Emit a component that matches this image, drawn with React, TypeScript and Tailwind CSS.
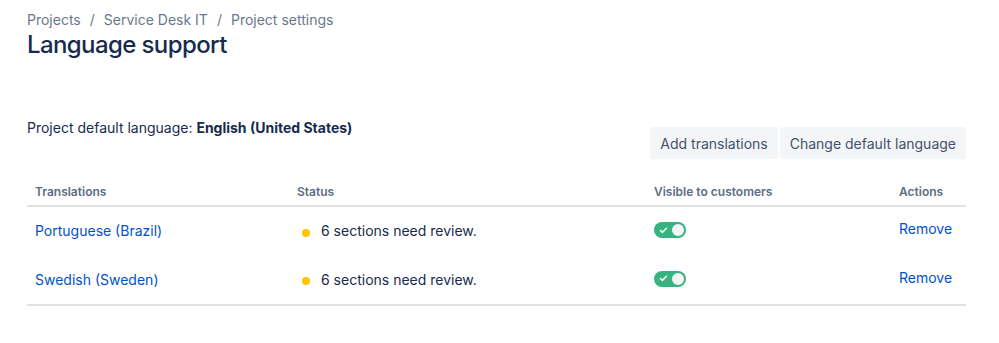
import { Check } from 'lucide-react';

const rows = [
  { name: 'Portuguese (Brazil)', status: '6 sections need review.' },
  { name: 'Swedish (Sweden)', status: '6 sections need review.' },
];

function Toggle() {
  return (
    <div className="relative flex h-4 w-8 items-center rounded-full bg-[#36B37E] px-[2px]">
      <Check className="ml-[3px] h-[9px] w-[9px] text-white" strokeWidth={4} />
      <div className="ml-auto h-3 w-3 rounded-full bg-[#F4F5F7]" />
    </div>
  );
}

export default function App() {
  return (
    <div className="min-h-screen bg-white pl-[27px] pr-[33px] font-['Inter',sans-serif] text-[#172B4D]">
      {/* Header */}
      <nav className="flex items-center pt-[10px] text-[14px] leading-5 text-[#6B778C]">
        <span>Projects</span>
        <span className="mx-[9px]">/</span>
        <span>Service Desk IT</span>
        <span className="mx-[9px]">/</span>
        <span>Project settings</span>
      </nav>
      <h1 className="mt-px text-[24px] font-medium leading-7 tracking-[-0.025em] text-[#172B4D]">
        Language support
      </h1>

      <div className="mt-[59px] flex items-start justify-between">
        <p className="text-[14px] leading-5">
          Project default language: <span className="font-bold">English (United States)</span>
        </p>
        <div className="mt-[9px] flex gap-[2px]">
          <button className="h-8 rounded-[3px] bg-[#F4F5F7] px-[10px] text-[14px] text-[#42526E]">
            Add translations
          </button>
          <button className="h-8 rounded-[3px] bg-[#F4F5F7] px-[10px] text-[14px] text-[#42526E]">
            Change default language
          </button>
        </div>
      </div>

      {/* Table */}
      <div className="mt-[21px] border-b-2 border-[#DFE1E6]">
        <div className="grid grid-cols-[262px_357px_245px_1fr] border-b-2 border-[#DFE1E6] pb-[5px] pt-1 text-[12px] font-semibold leading-4 text-[#5E6C84]">
          <div className="px-2">Translations</div>
          <div className="px-2">Status</div>
          <div className="px-2">Visible to customers</div>
          <div className="px-2">Actions</div>
        </div>
        {rows.map((row, i) => (
          <div
            key={i}
            className={`grid grid-cols-[262px_357px_245px_1fr] items-center text-[14px] leading-5 ${i === 0 ? 'h-12' : 'h-[49px]'}`}
          >
            <div className="px-2 text-[#0052CC]">{row.name}</div>
            <div className="flex items-center px-2">
              <span className="ml-[5px] mr-[11px] mt-[3px] h-2 w-2 rounded-full bg-[#FFC400]" />
              <span>{row.status}</span>
            </div>
            <div className="mb-[2px] px-2">
              <Toggle />
            </div>
            <div className="mb-[4px] px-2 text-[#0052CC]">Remove</div>
          </div>
        ))}
      </div>
    </div>
  );
}
